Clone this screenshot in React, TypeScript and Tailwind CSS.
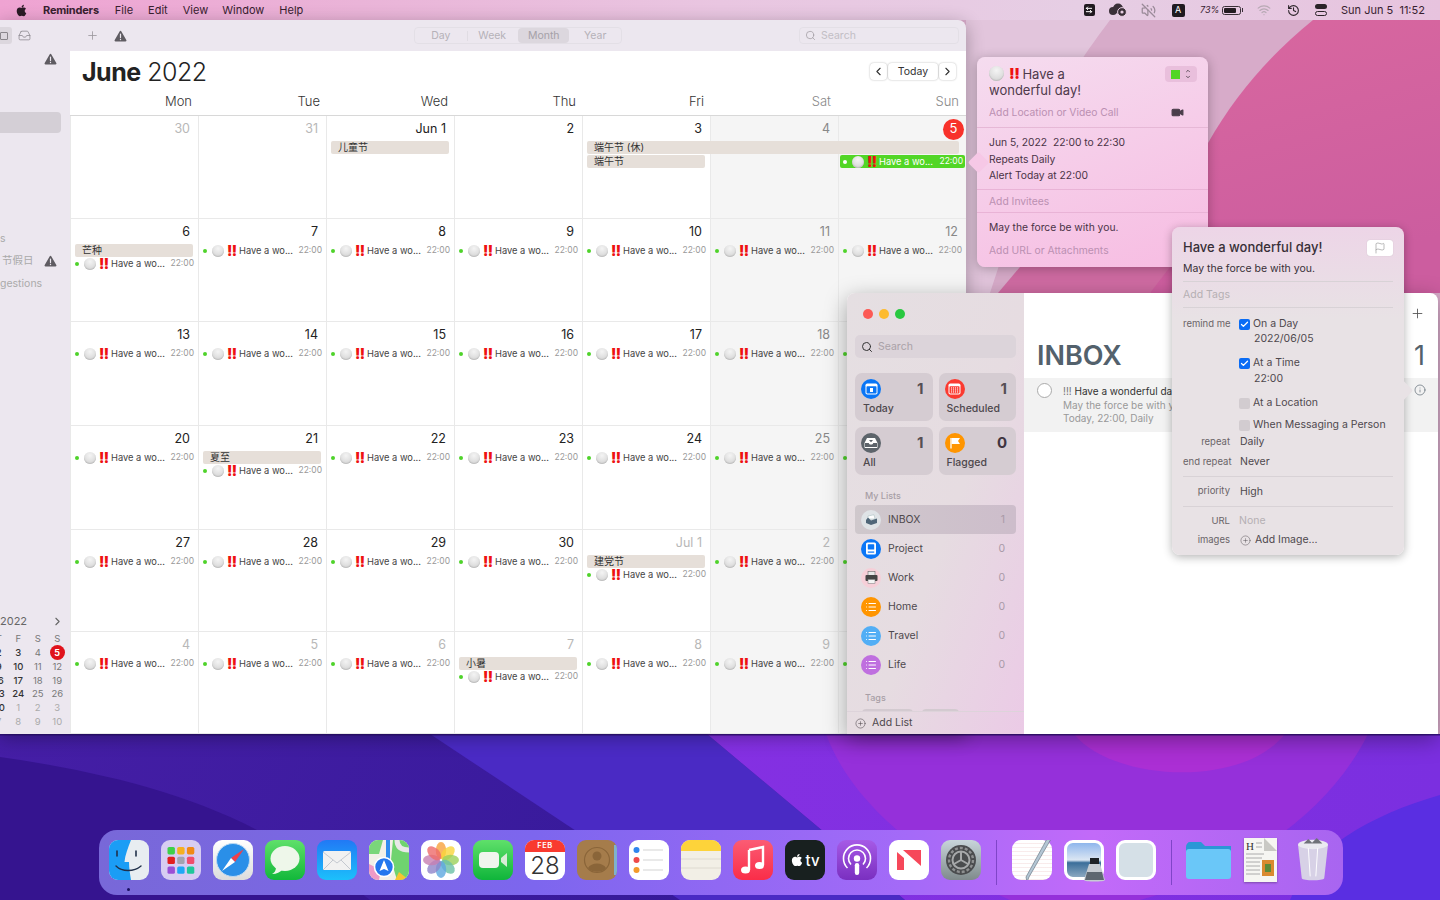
import React from 'react';
import { FaApple } from 'react-icons/fa';
import {
  ChevronDown, ChevronLeft, ChevronRight, ChevronUp, Check, Flag, History, Inbox,
  Info, List, Plus, CirclePlus, Search, Video, VolumeOff, Wifi, ArrowLeftRight,
} from 'lucide-react';

type Tone = 'normal' | 'weekend' | 'dim';
type Day = { label: string; tone: Tone; bars?: string[]; reminder?: boolean; span?: boolean; today?: boolean };

const d = (label: string, tone: Tone = 'normal', reminder = true, bars?: string[]): Day => ({ label, tone, reminder, bars });

const weeks: Day[][] = [
  [
    d('30', 'dim', false), d('31', 'dim', false), d('Jun 1', 'normal', false, ['儿童节']), d('2', 'normal', false),
    { label: '3', tone: 'normal', span: true }, d('4', 'weekend', false),
    { label: '5', tone: 'normal', today: true },
  ],
  [d('6', 'normal', true, ['芒种']), d('7'), d('8'), d('9'), d('10'), d('11', 'weekend'), d('12', 'weekend')],
  [d('13'), d('14'), d('15'), d('16'), d('17'), d('18', 'weekend'), d('19', 'weekend')],
  [d('20'), d('21', 'normal', true, ['夏至']), d('22'), d('23'), d('24'), d('25', 'weekend'), d('26', 'weekend')],
  [d('27'), d('28'), d('29'), d('30'), d('Jul 1', 'dim', true, ['建党节']), d('2', 'dim'), d('3', 'dim')],
  [d('4', 'dim'), d('5', 'dim'), d('6', 'dim'), d('7', 'dim', true, ['小暑']), d('8', 'dim'), d('9', 'dim'), d('10', 'dim')],
];

const Warn = ({ className = '' }: { className?: string }) => (
  <svg width="13" height="12" viewBox="0 0 13 12" className={`shrink-0 ${className}`}>
    <path d="M6.5 0.8 C6.9 0.8 7.2 1 7.4 1.4 L12.3 10 C12.7 10.7 12.3 11.4 11.5 11.4 H1.5 C0.7 11.4 0.3 10.7 0.7 10 L5.6 1.4 C5.8 1 6.1 0.8 6.5 0.8 Z" fill="#5f5c62" />
    <path d="M6.5 4 V7.6" stroke="#ece7ef" strokeWidth="1.2" strokeLinecap="round" />
    <circle cx="6.5" cy="9.5" r="0.7" fill="#ece7ef" />
  </svg>
);

const Ball = ({ className }: { className: string }) => (
  <span className={`shrink-0 rounded-full bg-[radial-gradient(circle_at_50%_30%,#f4f4f4,#cfcfcf)] shadow-[inset_0_-1px_1px_#bdbdbd] ${className}`} />
);

const Reminder = ({ active }: { active?: boolean }) => (
  <div className={`flex h-[13px] items-center pl-1 pr-1 ${active ? 'mx-px rounded-[2px] bg-[#52d626] pl-[3px] pr-[2px]' : ''}`}>
    <span className={`h-1 w-1 shrink-0 rounded-full ${active ? 'bg-white' : 'bg-[#4fd32a]'}`} />
    <Ball className="ml-[5px] h-3 w-3" />
    <span className="ml-[3px] w-[10px] shrink-0 text-[14px] font-black leading-[13px] tracking-[-0.5px] text-[#ee1111]">!!</span>
    <span className={`ml-[2px] w-[56px] shrink-0 whitespace-nowrap text-[9.3px] leading-[13px] ${active ? 'text-white' : 'text-[#444]'}`}>Have a wo...</span>
    <span className={`ml-auto text-[8.5px] leading-[13px] ${active ? 'text-white' : 'text-[#999]'}`}>22:00</span>
  </div>
);

const Bar = ({ text, className = '' }: { text: string; className?: string }) => (
  <div className={`ml-[4px] mr-[5px] h-[13px] whitespace-nowrap rounded-[2px] bg-[#e6dfd9] pl-[7px] text-[10px] leading-[13px] text-[#333] ${className}`}>{text}</div>
);

const Cell = ({ day, shaded }: { day: Day; shaded: boolean }) => {
  const color = day.tone === 'dim' ? 'text-[#b8b8b8]' : day.tone === 'weekend' ? 'text-[#888]' : 'text-[#222]';
  return (
    <div className={`min-w-0 border-b border-l border-[#e9e9e9] ${shaded ? 'bg-[#f5f5f5]' : 'bg-white'}`}>
      <div className={`flex h-[25px] items-center justify-end pr-2 pt-px text-[12.5px] ${color}`}>
        {day.today ? (
          <span className="-mr-[6px] flex h-[21px] w-[21px] items-center justify-center rounded-full bg-[#f8322b] text-[13px] text-white">5</span>
        ) : (
          day.label
        )}
      </div>
      {day.span && (
        <div className="flex flex-col gap-px">
          <Bar text="端午节 (休)" className="relative z-10 w-[372px]" />
          <Bar text="端午节" />
        </div>
      )}
      {day.bars?.map((b) => <Bar key={b} text={b} />)}
      {day.today && (
        <div className="pt-[14px]">
          <Reminder active />
        </div>
      )}
      {day.reminder && <Reminder />}
    </div>
  );
};

const Seg = ({ text, on }: { text: string; on?: boolean }) => (
  <span className={`flex h-full w-[52px] items-center justify-center rounded-[4px] ${on ? 'bg-[#dcd7de] text-[#a5a1a8]' : ''}`}>{text}</span>
);

const MiniCal = () => {
  const rows = [
    ['T', 'F', 'S', 'S'],
    ['2', '3', '4', '5'],
    ['9', '10', '11', '12'],
    ['16', '17', '18', '19'],
    ['23', '24', '25', '26'],
    ['30', '1', '2', '3'],
    ['7', '8', '9', '10'],
  ];
  return (
    <div className="-ml-[11px] grid h-[97px] w-[78px] grid-cols-4 grid-rows-7 text-center text-[9.5px] leading-[14px]">
      {rows.flat().map((t, i) => {
        const row = Math.floor(i / 4);
        const col = i % 4;
        let cls = 'text-[#333] font-medium';
        if (row === 0) cls = 'text-[#777]';
        else if (row === 5 && col > 0) cls = 'text-[#aaa]';
        else if (row === 6) cls = 'text-[#aaa]';
        else if (col >= 2) cls = 'text-[#777]';
        if (t === '5' && row === 1) {
          return (
            <span key={i} className="flex items-center justify-center">
              <span className="flex h-[15px] w-[15px] items-center justify-center rounded-full bg-[#e0121c] text-[9px] font-bold text-white">5</span>
            </span>
          );
        }
        return <span key={i} className={cls}>{t}</span>;
      })}
    </div>
  );
};

const CalendarWindow = () => (
  <div className="absolute left-0 top-[20px] flex h-[714px] w-[966px] overflow-hidden rounded-tr-[8px] shadow-[0_4px_18px_rgba(0,0,0,0.3)]">
    <aside className="flex w-[70px] shrink-0 flex-col overflow-hidden bg-[#ece7ef] text-[10.5px] text-[#aaa]">
      <div className="flex h-[31px] items-center">
        <span className="flex h-[17px] w-[12px] items-center justify-center rounded-r-[3px] bg-[#dcd7de]">
          <span className="-ml-1 h-[8px] w-[8px] rounded-[1px] border border-[#8a868c]" />
        </span>
        <Inbox size={13} strokeWidth={1.4} className="ml-[6px] text-[#8a868c]" />
      </div>
      <div className="mt-[2px] flex justify-end pr-[13px]">
        <Warn />
      </div>
      <div className="mt-[47px] h-[21px] w-[61px] shrink-0 rounded-r-[4px] bg-[#d4cfd6]" />
      <div className="mt-[99px] leading-[14px]">s</div>
      <div className="mt-[8px] flex items-center justify-between pr-[13px] leading-[14px]">
        <span className="ml-[2px] whitespace-nowrap">节假日</span>
        <Warn />
      </div>
      <div className="mt-[9px] whitespace-nowrap leading-[14px]">gestions</div>
      <div className="mt-auto">
        <div className="flex h-[14px] items-center justify-between pr-[6px] text-[11px] text-[#666]">
          <span>2022</span>
          <ChevronRight size={13} className="text-[#666]" />
        </div>
        <div className="mt-[4px] pb-[5px]">
          <MiniCal />
        </div>
      </div>
    </aside>
    <div className="flex min-w-0 flex-1 flex-col">
      <div className="flex h-[31px] shrink-0 items-center bg-[#ece7ef] text-[10.5px] text-[#b5b1b8]">
        <Plus size={13} strokeWidth={1.5} className="ml-[16px] text-[#9a969c]" />
        <Warn className="ml-[15px]" />
        <div className="ml-[287px] flex h-[17px] w-[208px] items-center rounded-[4px] border border-[#e3dfe6]">
          <Seg text="Day" />
          <span className="-mr-px h-[10px] w-px bg-[#e0dce3]" />
          <Seg text="Week" />
          <Seg text="Month" on />
          <Seg text="Year" />
        </div>
        <div className="ml-[177px] flex h-[17px] w-[160px] items-center rounded-[4px] border border-[#e3dfe6] pl-[5px]">
          <Search size={11} strokeWidth={1.5} className="text-[#9a969c]" />
          <span className="ml-[5px] text-[#c2bec5]">Search</span>
        </div>
      </div>
      <div className="flex h-[65px] shrink-0 flex-col border-b border-[#d8d8d8] bg-white">
        <div className="flex h-[39px] items-start">
          <h1 className="ml-[12px] text-[25px] leading-[43px] tracking-[-0.5px] text-[#222]">
            <span className="font-bold">June</span> <span className="font-light">2022</span>
          </h1>
          <div className="ml-auto mr-[10px] mt-[12px] flex items-center text-[10.5px] text-[#333]">
            <span className="flex h-[17px] w-[17px] items-center justify-center rounded-[4px] shadow-[0_0_2px_rgba(0,0,0,0.3)]"><ChevronLeft size={13} /></span>
            <span className="mx-px flex h-[17px] w-[50px] items-center justify-center rounded-[4px] shadow-[0_0_2px_rgba(0,0,0,0.3)]">Today</span>
            <span className="flex h-[17px] w-[17px] items-center justify-center rounded-[4px] shadow-[0_0_2px_rgba(0,0,0,0.3)]"><ChevronRight size={13} /></span>
          </div>
        </div>
        <div className="grid grid-cols-7 text-right text-[13px] font-light leading-[22px] text-[#333]">
          {['Mon', 'Tue', 'Wed', 'Thu', 'Fri'].map((t) => <span key={t} className="pr-[6px]">{t}</span>)}
          {['Sat', 'Sun'].map((t) => <span key={t} className="pr-[7px] text-[#888]">{t}</span>)}
        </div>
      </div>
      <div className="grid min-h-0 flex-1 grid-cols-7 grid-rows-[103px_103px_104px_104px_102px_102px]">
        {weeks.flat().map((day, i) => <Cell key={i} day={day} shaded={i % 7 >= 5} />)}
      </div>
    </div>
  </div>
);

const EventPopover = () => (
  <div className="absolute left-[977px] top-[57px] h-[210px] w-[231px] rounded-[8px] bg-[linear-gradient(160deg,#f5dcef,#f7bce2)] text-[10.3px] text-[#4a3346] shadow-[0_2px_12px_rgba(0,0,0,0.28)]">
    <span className="absolute -left-[6px] top-[98px] h-[15px] w-[15px] rotate-45 rounded-[2px] bg-[#f6c8e6]" />
    <div className="relative px-3">
      <div className="flex pt-[9px]">
        <div className="w-[150px] text-[13px] leading-[16px] text-[#4e3a4b]">
          <Ball className="mr-[5px] inline-block h-[15px] w-[15px] align-[-2px]" />
          <span className="mr-[3px] text-[15px] font-black tracking-[-0.5px] text-[#ee1111]">!!</span>
          Have a
          <br />
          wonderful day!
        </div>
        <div className="ml-auto mr-[-1px] flex h-[16px] w-[32px] items-center justify-center gap-[5px] rounded-[4px] bg-[#e9bfdc]">
          <span className="h-[9px] w-[9px] bg-[#52d626]" />
          <span className="flex flex-col text-[#3a3038]">
            <ChevronUp size={6} strokeWidth={3} />
            <ChevronDown size={6} strokeWidth={3} />
          </span>
        </div>
      </div>
      <div className="mt-[6px] flex h-[16px] items-center justify-between leading-[16px] text-[#bb90b2]">
        Add Location or Video Call
        <Video size={13} className="mr-[12px] fill-[#4a3d4a] text-[#4a3d4a]" />
      </div>
    </div>
    <div className="relative mt-[7px] border-t border-[#e6b8d6] px-3 pt-[6px] leading-[16.5px]">
      <div className="whitespace-pre">Jun 5, 2022  22:00 to 22:30</div>
      <div>Repeats Daily</div>
      <div>Alert Today at 22:00</div>
    </div>
    <div className="relative mt-[5px] h-[24px] border-y border-[#e9b3d6] px-3 leading-[22px] text-[#bb90b2]">Add Invitees</div>
    <div className="relative px-3 pt-[6px] leading-[16px]">May the force be with you.</div>
    <div className="relative px-3 pt-[7px] leading-[16px] text-[#bb90b2]">Add URL or Attachments</div>
  </div>
);

// small white glyphs that sit in the round list badges
const CalGlyph = ({ fill, grid }: { fill: string; grid?: boolean }) => (
  <svg width="13" height="12" viewBox="0 0 13 12">
    <rect x="0.5" y="0.5" width="12" height="11" rx="1.8" fill="#fff" />
    <rect x="1.5" y="3.2" width="10" height="7.3" rx="0.8" fill={fill} />
    {grid ? (
      [0, 1, 2, 3].map((c) => [0, 1, 2].map((r) => <rect key={`${c}-${r}`} x={3 + c * 2} y={4.4 + r * 2} width="1.1" height="1.1" fill="#fff" />))
    ) : (
      <rect x="5" y="5" width="3" height="4" fill="#fff" />
    )}
  </svg>
);

const TrayGlyph = () => (
  <svg width="14" height="12" viewBox="0 0 14 12">
    <path d="M3 1 H11 L13.5 6 V10 C13.5 10.8 13 11 12.5 11 H1.5 C1 11 0.5 10.8 0.5 10 V6 Z" fill="#fff" />
    <path d="M1 6 H4.8 C5 8 9 8 9.2 6 H13 V10 H1 Z" fill="#5d646b" />
    <path d="M5 3 H9 L7 5.2 Z" fill="#5d646b" />
  </svg>
);

const FlagGlyph = () => (
  <svg width="12" height="12" viewBox="0 0 12 12">
    <path d="M2 1 V11.5" stroke="#fff" strokeWidth="1.3" />
    <path d="M2.6 1 H11 L9 4 L11 7 H2.6 Z" fill="#fff" />
  </svg>
);

const ProjectGlyph = () => (
  <svg width="12" height="13" viewBox="0 0 12 13">
    <rect x="1" y="0.5" width="10" height="12" rx="1.5" fill="#fff" />
    <rect x="2.8" y="2.2" width="6.4" height="5.4" rx="0.5" fill="#0a76f6" />
    <rect x="2.8" y="9.5" width="6.4" height="1.2" fill="#0a76f6" />
  </svg>
);

const PrinterGlyph = () => (
  <svg width="13" height="13" viewBox="0 0 13 13">
    <rect x="3" y="0.5" width="7" height="4" fill="#e8e8e8" stroke="#555" strokeWidth="0.5" />
    <rect x="0.5" y="4" width="12" height="6" rx="1" fill="#444" />
    <rect x="3" y="8.5" width="7" height="4" fill="#f4f4f4" stroke="#777" strokeWidth="0.5" />
  </svg>
);

const InboxGlyph = () => (
  <svg width="13" height="12" viewBox="0 0 13 12">
    <path d="M3 2 L9 0.8 L10 5 H3 Z" fill="#fff" stroke="#8aa" strokeWidth="0.4" />
    <path d="M1 6 L3 3.5 L6 6.5 L12 4.5 V9 L6 11 L1 9 Z" fill="#4f6678" />
  </svg>
);

const SmartCard = ({ icon, bg, count, label, dark }: { icon: React.ReactNode; bg: string; count: string; label: string; dark?: boolean }) => (
  <div className="h-[48px] rounded-[7px] bg-[#d5ccd2] px-[6px] pt-[5px]">
    <div className="flex items-center justify-between">
      <span className={`flex h-[20px] w-[20px] items-center justify-center rounded-full text-white ${bg}`}>{icon}</span>
      <span className={`pr-[3px] text-[15px] font-bold ${dark ? 'text-[#3f3540]' : 'text-[#564f55]'}`}>{count}</span>
    </div>
    <div className="pl-[2px] text-[10.5px] font-medium leading-[16px] text-[#4e484d]">{label}</div>
  </div>
);

const ListRow = ({ icon, bg, label, count, on }: { icon: React.ReactNode; bg: string; label: string; count: string; on?: boolean }) => (
  <div className={`flex h-[29px] items-center rounded-[4px] pl-[6px] pr-[11px] ${on ? 'bg-[linear-gradient(90deg,#cfc8cc,#cdbdcb)]' : ''}`}>
    <span className={`flex h-[20px] w-[20px] items-center justify-center rounded-full text-white ${bg}`}>{icon}</span>
    <span className="ml-[7px] text-[10.5px] text-[#4e484d]">{label}</span>
    <span className="ml-auto text-[10.5px] text-[#a99aa8]">{count}</span>
  </div>
);

const ReminderWindow = () => (
  <div className="absolute left-[847px] top-[293px] flex h-[441px] w-[591px] overflow-hidden rounded-t-[8px] bg-white shadow-[0_6px_22px_rgba(0,0,0,0.35)]">
    <aside className="flex w-[177px] shrink-0 flex-col bg-[linear-gradient(110deg,#e5dfe2,#e6dce1_55%,#ebcae6)]">
      <div className="flex shrink-0 gap-[6px] pl-[16px] pt-[16px]">
        <span className="h-[10px] w-[10px] rounded-full bg-[#fc5a55]" />
        <span className="h-[10px] w-[10px] rounded-full bg-[#fdbb2f]" />
        <span className="h-[10px] w-[10px] rounded-full bg-[#29c840]" />
      </div>
      <div className="mx-[8px] mt-[16px] flex h-[23px] shrink-0 items-center rounded-[5px] bg-[#dcd4da] pl-[6px] text-[10.5px] text-[#aaa2a8]">
        <Search size={12} strokeWidth={2} className="text-[#333]" />
        <span className="ml-[5px]">Search</span>
      </div>
      <div className="mx-[8px] mt-[15px] grid shrink-0 grid-cols-2 gap-x-[6px] gap-y-[6px]">
        <SmartCard bg="bg-[#0a76f6]" icon={<CalGlyph fill="#0a76f6" />} count="1" label="Today" />
        <SmartCard bg="bg-[#fb3a30]" icon={<CalGlyph fill="#fb3a30" grid />} count="1" label="Scheduled" />
        <SmartCard bg="bg-[#5d646b]" icon={<TrayGlyph />} count="1" label="All" />
        <SmartCard bg="bg-[#ff9500]" icon={<FlagGlyph />} count="0" label="Flagged" dark />
      </div>
      <div className="ml-[18px] mt-[14px] h-[14px] shrink-0 text-[9px] font-medium leading-[14px] text-[#a89fa6]">My Lists</div>
      <div className="mx-[8px] mt-[2px] shrink-0">
        <ListRow on bg="bg-[#dfe3e6]" icon={<InboxGlyph />} label="INBOX" count="1" />
        <ListRow bg="bg-[#0a76f6]" icon={<ProjectGlyph />} label="Project" count="0" />
        <ListRow bg="bg-[#f6cfd8]" icon={<PrinterGlyph />} label="Work" count="0" />
        <ListRow bg="bg-[#ff9500]" icon={<List size={12} />} label="Home" count="0" />
        <ListRow bg="bg-[#52aef5]" icon={<List size={12} />} label="Travel" count="0" />
        <ListRow bg="bg-[#bf6fdf]" icon={<List size={12} />} label="Life" count="0" />
      </div>
      <div className="ml-[18px] mt-[12px] h-[14px] shrink-0 text-[9px] font-medium leading-[14px] text-[#a89fa6]">Tags</div>
      <div className="ml-[15px] mt-[4px] flex h-[2px] shrink-0 gap-[9px] overflow-hidden">
        <span className="h-[8px] w-[51px] rounded-t-[4px] bg-[#d3cad0]" />
        <span className="h-[8px] w-[37px] rounded-t-[4px] bg-[#d3cad0]" />
      </div>
      <div className="mt-auto flex h-[23px] shrink-0 items-center border-t border-[#ddd3da] pl-[8px] text-[10.5px] text-[#4e484d]">
        <CirclePlus size={11} strokeWidth={1.2} />
        <span className="ml-[6px]">Add List</span>
      </div>
    </aside>
    <main className="flex min-w-0 flex-1 flex-col">
      <div className="flex h-[41px] shrink-0 items-center justify-end pr-[13px]">
        <Plus size={15} strokeWidth={1.4} className="text-[#555]" />
      </div>
      <div className="mt-[1px] flex h-[43px] shrink-0 items-start justify-between px-[13px] text-[27px] font-semibold leading-[41px] text-[#53616c]">
        <span>INBOX</span>
        <span className="font-normal">1</span>
      </div>
      <div className="flex h-[54px] shrink-0 bg-[#f2f2f2] pl-[13px] pt-[7px] text-[10px] leading-[13.5px]">
        <span className="-mt-[2px] h-[15px] w-[15px] shrink-0 rounded-full border border-[#aaa] bg-white" />
        <div className="ml-[11px] text-[#999]">
          <div><span className="text-[#777]">!!!</span> <span className="text-[#333]">Have a wonderful day!</span></div>
          <div>May the force be with you.</div>
          <div>Today, 22:00, Daily</div>
        </div>
        <Info size={12} strokeWidth={1.3} className="-mt-[1px] ml-auto mr-[12px] text-[#53616c]" />
      </div>
    </main>
  </div>
);

const Check2 = ({ on }: { on?: boolean }) =>
  on ? (
    <span className="flex h-[11px] w-[11px] items-center justify-center rounded-[2px] bg-[#0a6cf5] text-white"><Check size={9} strokeWidth={3.5} /></span>
  ) : (
    <span className="h-[11px] w-[11px] rounded-[2px] bg-[#d2ccd0]" />
  );

const InfoPopover = () => (
  <div className="absolute left-[1172px] top-[227px] h-[328px] w-[232px] rounded-[8px] bg-[linear-gradient(180deg,#edd5e7,#e8e2e5_28%,#e8e2e5)] text-[10.5px] text-[#4e484d] shadow-[0_2px_10px_rgba(0,0,0,0.3)]">
    <span className="absolute -right-[6px] top-[156px] h-[15px] w-[15px] rotate-45 rounded-[2px] bg-[#e8e2e5]" />
    <div className="relative px-[11px]">
      <div className="flex h-[40px] items-center justify-between pt-[1px]">
        <span className="text-[13px] font-medium text-[#382f37]">Have a wonderful day!</span>
        <span className="flex h-[16px] w-[26px] items-center justify-center rounded-[3px] bg-white shadow-[0_0_1px_rgba(0,0,0,0.2)]">
          <Flag size={12} strokeWidth={1} className="text-[#777]" />
        </span>
      </div>
      <div className="-mt-[5px] h-[13px] leading-[13px] text-[#382f37]">May the force be with you.</div>
      <div className="mt-[6px] h-[27px] border-y border-[#d8d2d6] leading-[25px] text-[#b5afb3]">Add Tags</div>
      <div className="mt-[9px] grid grid-cols-[47px_1fr] gap-x-[9px] leading-[14px]">
        <span className="whitespace-nowrap text-right text-[9.5px] text-[#6a6468]">remind me</span>
        <div>
          <div className="flex items-center gap-[3px]"><Check2 on /><span>On a Day</span></div>
          <div className="ml-[15px] mt-[1px]">2022/06/05</div>
          <div className="mt-[10px] flex items-center gap-[3px]"><Check2 on /><span>At a Time</span></div>
          <div className="ml-[15px] mt-[2px]">22:00</div>
          <div className="mt-[10px] flex items-center gap-[3px]"><Check2 /><span>At a Location</span></div>
          <div className="mt-[8px] flex items-center gap-[3px]"><Check2 /><span className="whitespace-nowrap">When Messaging a Person</span></div>
        </div>
        <span className="mt-[3px] text-right text-[9.5px] text-[#6a6468]">repeat</span>
        <span className="mt-[3px] pl-px">Daily</span>
        <span className="mt-[6px] whitespace-nowrap text-right text-[9.5px] text-[#6a6468]">end repeat</span>
        <span className="mt-[6px] pl-px">Never</span>
      </div>
      <div className="mt-[7px] grid h-[31px] grid-cols-[47px_1fr] items-center gap-x-[9px] border-y border-[#d8d2d6]">
        <span className="text-right text-[9.5px] text-[#6a6468]">priority</span>
        <span className="pl-px">High</span>
      </div>
      <div className="mt-[7px] grid grid-cols-[47px_1fr] gap-x-[9px] gap-y-[5px] leading-[14px]">
        <span className="text-right text-[9.5px] text-[#6a6468]">URL</span>
        <span className="text-[#b5afb3]">None</span>
        <span className="text-right text-[9.5px] text-[#6a6468]">images</span>
        <span className="flex items-center gap-[4px] pl-px"><CirclePlus size={11} strokeWidth={1} />Add Image...</span>
      </div>
    </div>
  </div>
);

const MenuBar = () => (
  <header className="absolute inset-x-0 top-0 flex h-[20px] items-center bg-[linear-gradient(90deg,#efa3d2,#eab4d8_25%,#e9c6e1_50%,#e6cee4_75%,#e7c3de)] text-[11px] text-[#38212f]">
    <FaApple size={13} className="ml-[15px] text-[#2b1a26]" />
    <span className="ml-[15px] font-bold tracking-[-0.2px]">Reminders</span>
    <span className="ml-[16px]">File</span>
    <span className="ml-[15px]">Edit</span>
    <span className="ml-[15px]">View</span>
    <span className="ml-[14px]">Window</span>
    <span className="ml-[15px]">Help</span>
    <div className="ml-auto flex w-[365px] items-center">
      <span className="flex w-[28px] justify-center"><span className="flex h-[12px] w-[11px] items-center justify-center rounded-[2px] bg-[#201a20] text-white"><ArrowLeftRight size={8} strokeWidth={3} /></span></span>
      <span className="flex w-[28px] justify-center">
        <svg width="19" height="14" viewBox="0 0 19 14">
          <circle cx="5" cy="8" r="4" fill="#3a3038" />
          <circle cx="10" cy="5.5" r="5" fill="#3a3038" />
          <circle cx="14" cy="9" r="4.4" fill="#3a3038" stroke="#e8cfe3" strokeWidth="1" />
          <circle cx="14" cy="9" r="1.6" fill="#e8cfe3" />
        </svg>
      </span>
      <span className="flex w-[34px] justify-center"><VolumeOff size={15} className="text-[#9a8a98]" /></span>
      <span className="flex w-[26px] justify-center"><span className="flex h-[13px] w-[13px] items-center justify-center rounded-[2px] bg-[#201a20] text-[9px] text-white">A</span></span>
      <span className="ml-[9px] w-[22px] text-[9px] italic">73%</span>
      <span className="flex items-center">
        <span className="flex h-[9px] w-[19px] items-center rounded-[2.5px] border border-[#3a3038] p-px"><span className="h-full w-[12px] rounded-[1px] bg-[#241c22]" /></span>
        <span className="ml-px h-[4px] w-px bg-[#3a3038]" />
      </span>
      <span className="ml-[14px] flex w-[14px] justify-center"><Wifi size={14} className="text-[#b7a9b4]" /></span>
      <span className="ml-[15px] flex w-[14px] justify-center"><History size={13} className="text-[#2b2429]" /></span>
      <span className="ml-[15px] flex h-[12px] w-[12px] flex-col justify-between">
        <span className="h-[5px] rounded-full bg-[#2b2429]" />
        <span className="h-[5px] rounded-full border border-[#2b2429]" />
      </span>
      <span className="ml-[14px] whitespace-pre text-[11px]">Sun Jun 5  11:52</span>
    </div>
  </header>
);

const Wallpaper = () => (
  <svg className="absolute inset-0 h-full w-full" viewBox="0 0 1440 900" preserveAspectRatio="none">
    <defs>
      <linearGradient id="leftBand" x1="0" y1="0" x2="1" y2="0.3">
        <stop offset="0" stopColor="#4c20ab" />
        <stop offset="1" stopColor="#2d1793" />
      </linearGradient>
      <linearGradient id="rightBand" x1="0" y1="0" x2="1" y2="0">
        <stop offset="0" stopColor="#8430e2" />
        <stop offset="1" stopColor="#7b2fe0" />
      </linearGradient>
      <linearGradient id="magenta" x1="0" y1="0" x2="0.3" y2="1">
        <stop offset="0" stopColor="#d9689f" />
        <stop offset="1" stopColor="#cc5d9f" />
      </linearGradient>
    </defs>
    <rect width="1440" height="900" fill="url(#leftBand)" />
    <path d="M0 757 C90 770 180 790 257 830 C310 860 345 880 370 900 L0 900 Z" fill="#35148f" />
    <path d="M430 734 L707 734 L905 900 L680 900 Z" fill="#4a2ac4" />
    <path d="M707 734 L1440 734 L1440 900 L905 900 Z" fill="url(#rightBand)" />
    <path d="M826 734 C850 800 920 860 1010 900 L1140 900 C1250 870 1330 810 1368 734 Z" fill="#9530da" />
    <path d="M1074 734 C1110 780 1240 790 1285 734 Z" fill="#ab2fd4" />
    <path d="M1440 795 C1370 815 1310 850 1290 900 L1440 900 Z" fill="#5a2ee2" />
    <rect y="0" width="1440" height="734" fill="#d7abc9" />
    <path d="M1000 20 L1110 20 C1080 60 1060 90 1040 140 L990 293 L966 293 L966 20 Z" fill="#e2c5dc" />
    <path d="M1313 20 C1270 55 1235 95 1208 143 L1157 270 L1150 293 L1440 293 L1440 20 Z" fill="url(#magenta)" />
    <path d="M998 293 L1020 267 L1170 267 L1150 293 Z" fill="#cf6ba2" />
    <rect y="734" width="1440" height="1.5" fill="#2a0f70" opacity="0.8" />
  </svg>
);

const Tile = ({ className = '', children }: { className?: string; children?: React.ReactNode }) => (
  <div className={`relative h-[40px] w-[40px] shrink-0 overflow-hidden rounded-[9px] ${className}`}>{children}</div>
);

const Svg = ({ children }: { children: React.ReactNode }) => (
  <svg viewBox="0 0 40 40" className="absolute inset-0 h-full w-full">{children}</svg>
);

const petals = ['#f7a13c', '#f9d53b', '#9bd15a', '#6cc0a8', '#5ea8e0', '#9085c9', '#c77fb1', '#ee6a6a'];

const dockApps: React.ReactNode[] = [
  <Tile key="finder" className="bg-[#e8edf1]">
    <Svg>
      <path d="M0 0 H22 C19 8 16 15 15.5 22 H20 C20 28 21 34 22 40 H0 Z" fill="#1b9df5" />
      <path d="M8 11 V16 M27 11 V16" stroke="#20304a" strokeWidth="1.6" strokeLinecap="round" />
      <path d="M7 26 C13 32 25 32 32 26" stroke="#20304a" strokeWidth="1.4" fill="none" strokeLinecap="round" />
    </Svg>
  </Tile>,
  <Tile key="launchpad" className="bg-[#d7cdf2]">
    <Svg>
      {['#3fd04a', '#f5b021', '#f08a16', '#e21f1f', '#a3a3b0', '#f04d6d', '#9a4fd6', '#1fa8f5', '#1fc79a'].map((c, i) => (
        <rect key={c} x={6.5 + (i % 3) * 9.7} y={7 + Math.floor(i / 3) * 9.7} width="7.4" height="7.4" rx="1.6" fill={c} />
      ))}
    </Svg>
  </Tile>,
  <Tile key="safari" className="bg-[linear-gradient(#fff,#dcdcdc)]">
    <Svg>
      <circle cx="20" cy="20" r="16.5" fill="#2a8fe8" stroke="#b9d8f3" strokeWidth="1" />
      <path d="M31 9 L22 22 L18 18 Z" fill="#f0404a" />
      <path d="M9 31 L18 18 L22 22 Z" fill="#fff" />
    </Svg>
  </Tile>,
  <Tile key="messages" className="bg-[linear-gradient(#5fe06a,#12b83a)]">
    <Svg>
      <ellipse cx="20" cy="18.5" rx="14.5" ry="12.5" fill="#eef7ea" />
      <path d="M11 27 C11 31 9 33 7 34 C12 34 15 32 17 30 Z" fill="#eef7ea" />
    </Svg>
  </Tile>,
  <Tile key="mail" className="bg-[linear-gradient(#2179f5,#1cc0fb)]">
    <Svg>
      <rect x="6" y="11" width="28" height="19" rx="1.5" fill="#f1f1f1" />
      <path d="M6 12 L20 23 L34 12 M6 30 L16 20 M34 30 L24 20" stroke="#b9bec6" strokeWidth="0.8" fill="none" />
    </Svg>
  </Tile>,
  <Tile key="maps" className="bg-[#7ad67a]">
    <Svg>
      <rect width="40" height="40" fill="#f2f0e8" />
      <path d="M0 0 H14 L10 14 H0 Z" fill="#7ad67a" />
      <path d="M24 0 H40 V40 H28 L22 20 Z" fill="#6fd36f" />
      <path d="M0 24 L12 30 L10 40 H0 Z" fill="#ef9ac6" />
      <path d="M26 40 L30 32 L40 40 Z" fill="#f7c531" />
      <path d="M17 0 H21 V22 H17 Z" fill="#2f8bf0" />
      <path d="M28 0 C28 8 34 10 40 10" stroke="#e8e8e8" strokeWidth="5" fill="none" />
      <circle cx="15" cy="27" r="9.5" fill="#2477ee" stroke="#fff" strokeWidth="1.6" />
      <path d="M15 20 L19.5 31 L15 29 L10.5 31 Z" fill="#fff" />
    </Svg>
  </Tile>,
  <Tile key="photos" className="bg-white">
    <Svg>
      {petals.map((c, i) => (
        <ellipse key={c} cx="20" cy="10.5" rx="5.2" ry="8.5" fill={c} opacity="0.8" transform={`rotate(${i * 45} 20 20)`} />
      ))}
    </Svg>
  </Tile>,
  <Tile key="facetime" className="bg-[linear-gradient(#5fe06a,#0fb53a)]">
    <Svg>
      <rect x="6" y="12" width="20" height="16" rx="4" fill="#f1f5ee" />
      <path d="M28 18 L34 13 V27 L28 22 Z" fill="#d8ecd6" />
    </Svg>
  </Tile>,
  <Tile key="calendar" className="bg-white">
    <div className="flex h-[12px] items-center justify-center bg-[#f93a2f] text-[7.5px] font-semibold tracking-[0.5px] text-white">FEB</div>
    <div className="text-center text-[24px] font-light leading-[27px] text-[#333]">28</div>
  </Tile>,
  <Tile key="contacts" className="bg-[#a57c4b]">
    <Svg>
      <rect x="37" y="5" width="3" height="30" fill="#7fb2cc" />
      <circle cx="20" cy="20" r="12.5" fill="none" stroke="#8a6539" strokeWidth="1.2" />
      <circle cx="20" cy="16" r="4.5" fill="#8a6539" />
      <path d="M11 28 C14 22 26 22 29 28 C26 33 14 33 11 28 Z" fill="#8a6539" />
    </Svg>
  </Tile>,
  <Tile key="reminders" className="bg-white">
    <Svg>
      {['#2f85ee', '#ee4a4a', '#f39a2b'].map((c, i) => (
        <g key={c}>
          <circle cx="7.5" cy={10 + i * 10} r="3" fill={c} />
          <rect x="14" y={9.5 + i * 10} width="20" height="1" fill="#d4d4d4" />
        </g>
      ))}
    </Svg>
  </Tile>,
  <Tile key="notes" className="bg-[#f2efe6]">
    <Svg>
      <path d="M0 0 H40 V11 H0 Z" fill="#fdd33a" />
      <path d="M0 19 H40 M0 28 H40" stroke="#dedad0" strokeWidth="1" />
    </Svg>
  </Tile>,
  <Tile key="music" className="bg-[linear-gradient(#fb5c74,#fa2d48)]">
    <Svg>
      <path d="M16 10 L30 7 V25 M16 10 V30" stroke="#fff" strokeWidth="2.4" fill="none" />
      <ellipse cx="12.5" cy="30" rx="4.5" ry="3.6" fill="#fff" />
      <ellipse cx="26.5" cy="25.5" rx="4.5" ry="3.6" fill="#fff" />
    </Svg>
  </Tile>,
  <Tile key="tv" className="flex items-center justify-center bg-[#18201f] text-white">
    <FaApple size={14} />
    <span className="ml-[1px] text-[15px] font-medium leading-none">tv</span>
  </Tile>,
  <Tile key="podcasts" className="bg-[linear-gradient(#a65ae6,#7a2fc0)]">
    <Svg>
      <path d="M10.5 28 A13.5 13.5 0 1 1 29.5 28" stroke="#fff" strokeWidth="1.6" fill="none" />
      <path d="M14 24.5 A8.5 8.5 0 1 1 26 24.5" stroke="#fff" strokeWidth="1.6" fill="none" />
      <circle cx="20" cy="18.5" r="3.2" fill="#fff" />
      <rect x="17.8" y="23" width="4.4" height="12" rx="2.2" fill="#fff" />
    </Svg>
  </Tile>,
  <Tile key="news" className="bg-white">
    <Svg>
      <path d="M8 12 L8 30 H15 V18 Z M14 10 L32 10 V26 Z" fill="#f6485a" />
    </Svg>
  </Tile>,
  <Tile key="settings" className="bg-[linear-gradient(#c8d5da,#7f8a8b)]">
    <Svg>
      <circle cx="20" cy="20" r="15" fill="#4a4c4e" />
      <circle cx="20" cy="20" r="12" fill="none" stroke="#8e9091" strokeWidth="2.4" strokeDasharray="3 2" />
      <circle cx="20" cy="20" r="8.5" fill="none" stroke="#a6a8a9" strokeWidth="2" />
      <path d="M20 20 V12 M20 20 L13 24 M20 20 L27 24" stroke="#a6a8a9" strokeWidth="2" />
    </Svg>
  </Tile>,
];

const Dock = () => (
  <div className="absolute left-[99px] top-[830px] h-[65px] w-[1244px] rounded-[18px] bg-[linear-gradient(90deg,#7868d8,#7d66ee_35%,#a46af8_65%,#c26af9_80%,#a865f0)]">
    <div className="flex items-start pl-[10px] pt-[10px]">
      <div className="flex gap-[12px]">{dockApps}</div>
      <span className="mx-[15px] h-[45px] w-px bg-[#7f45c8]" />
      <div className="flex gap-[12px]">
        <div className="relative h-[40px] w-[40px] shrink-0 rounded-[9px] bg-[repeating-linear-gradient(#fff_0,#fff_3px,#f2d8d8_4px)]">
          <Svg>
            <path d="M36 -3 L39 -1 L17 37 L15 42 L14 37 Z" fill="#b4c6d4" stroke="#5b6b78" strokeWidth="0.6" />
          </Svg>
        </div>
        <div className="relative h-[40px] w-[40px] shrink-0 rounded-[9px] border-[3px] border-white bg-[linear-gradient(#8fb6ec,#dbe6f3_50%,#3a6e9a_58%,#8ba8c0)]">
          <svg viewBox="0 0 24 24" className="absolute -bottom-[5px] -right-[5px] h-[24px] w-[24px]">
            <rect x="8" y="0" width="9" height="6" fill="#1d2226" />
            <path d="M7 6 H18 L23 22 C23 24 2 24 2 22 Z" fill="#c6ccd2" />
            <path d="M5 14 H20 L22 22 H3 Z" fill="#5d6770" />
          </svg>
        </div>
        <Tile className="border-[3px] border-white bg-[#d5e0e7]" />
      </div>
      <span className="mx-[15px] h-[45px] w-px bg-[#7f45c8]" />
      <div className="flex gap-[12px]">
        <div className="relative -ml-px mt-px h-[38px] w-[45px] shrink-0">
          <svg viewBox="0 0 45 38" className="h-full w-full">
            <path d="M0 6 C0 3 2 1 4 1 H15 L19 5 H45 V14 H0 Z" fill="#2b97d6" />
            <rect y="8" width="45" height="30" rx="3" fill="#6ac7f8" />
          </svg>
        </div>
        <div className="ml-px -mt-[2px] h-[44px] w-[33px] shrink-0 bg-[#f6f6f2] shadow-[0_1px_2px_rgba(0,0,0,0.3)]">
          <svg viewBox="0 0 33 44" className="h-full w-full">
            <path d="M20 0 L33 13 H20 Z" fill="#c9c9c4" />
            <text x="2" y="12" fontSize="11" fontFamily="Liberation Serif, serif" fill="#333">H</text>
            <path d="M12 5 H18 M12 9 H18 M2 16 H20 M2 20 H18 M2 24 H16 M2 28 H16 M2 32 H16 M2 36 H16" stroke="#999" strokeWidth="0.8" />
            <rect x="18" y="22" width="12" height="16" fill="#d98a30" />
            <rect x="21" y="26" width="6" height="8" fill="#5c8a3a" />
          </svg>
        </div>
        <div className="-mt-[3px] ml-[7px] h-[45px] w-[34px] shrink-0">
          <svg viewBox="0 0 34 48" className="h-full w-full">
            <path d="M1 8 L5 44 C6 47 28 47 29 44 L33 8 Z" fill="#dcdde4" opacity="0.9" />
            <ellipse cx="17" cy="8" rx="16" ry="5" fill="#eaeaf0" />
            <path d="M7 7 L12 2 L16 6 L21 1 L27 7 Z" fill="#6f7279" />
            <path d="M12 12 L14 42 M22 12 L20 42" stroke="#fff" strokeWidth="1" />
          </svg>
        </div>
      </div>
    </div>
    <span className="absolute left-[28px] top-[58px] h-[3px] w-[3px] rounded-full bg-[#1a1060]" />
  </div>
);

export default function App() {
  return (
    <div className="relative h-[900px] w-[1440px] overflow-hidden antialiased [font-family:Inter,'Noto_Sans_CJK_SC',sans-serif]">
      <Wallpaper />
      <MenuBar />
      <CalendarWindow />
      <EventPopover />
      <ReminderWindow />
      <InfoPopover />
      <Dock />
    </div>
  );
}
